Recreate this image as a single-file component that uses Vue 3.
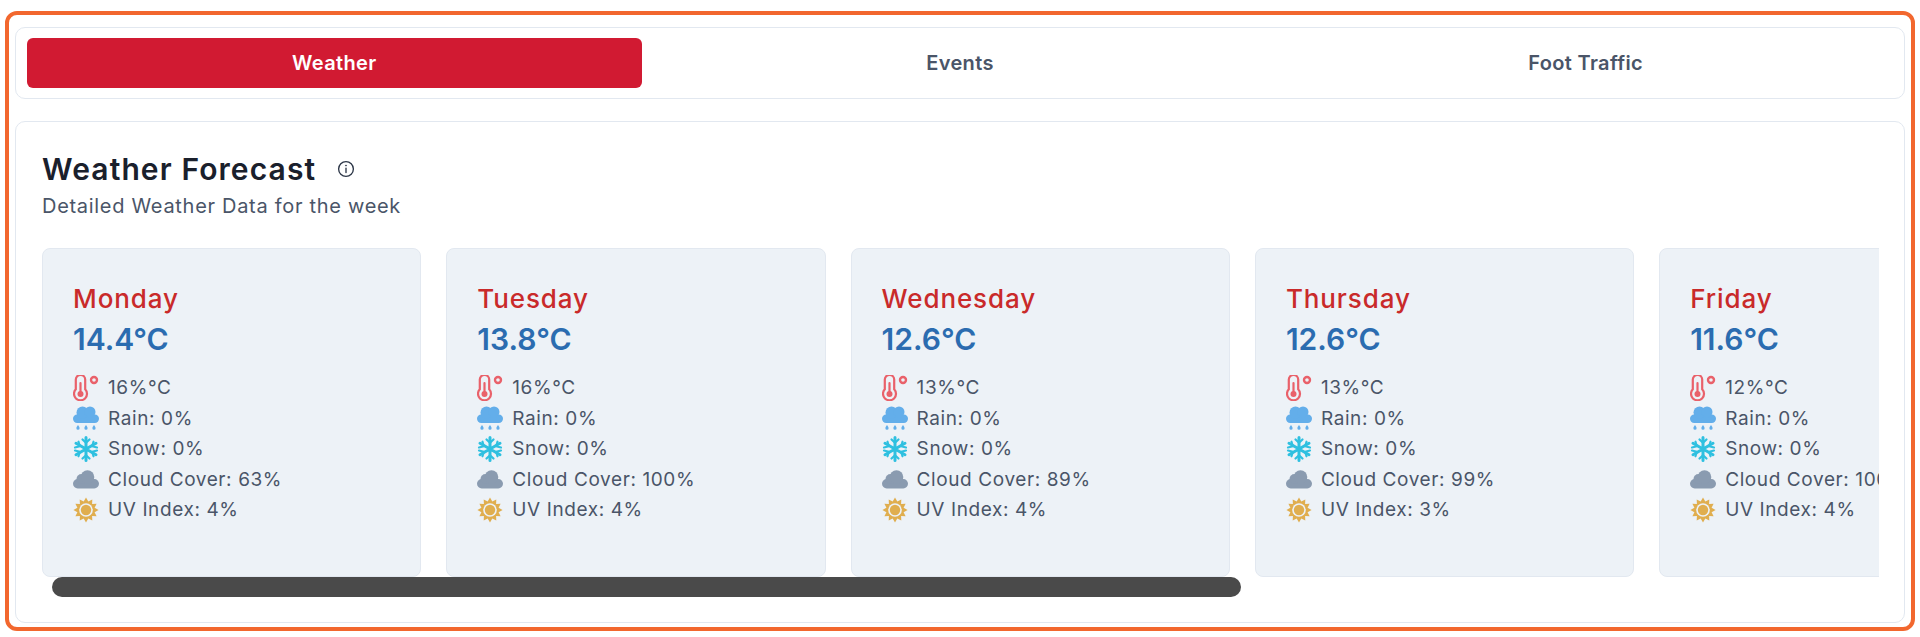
<template>
  <div class="page">
    <div class="frame">
      <!-- Tabs -->
      <div class="tabs">
        <button v-for="tab in tabs" :key="tab" type="button" class="tab" :class="{ active: tab === activeTab }" @click="activeTab = tab">
          {{ tab }}
        </button>
      </div>

      <!-- Forecast -->
      <section class="panel">
        <div class="panel-title">
          <h2>Weather Forecast</h2>
          <svg class="info" viewBox="0 0 20 20" fill="none" stroke="#2d3748" stroke-width="1.5">
            <circle cx="10" cy="10" r="8.2" />
            <path d="M10 9v5" stroke-linecap="round" />
            <circle cx="10" cy="6.2" r="0.6" fill="#2d3748" stroke-width="0.8" />
          </svg>
        </div>
        <p class="subtitle">Detailed Weather Data for the week</p>

        <div class="scroller">
          <article v-for="day in days" :key="day.name" class="card">
            <h3>{{ day.name }}</h3>
            <div class="temp">{{ day.temp }}°C</div>
            <ul>
              <li>
                <svg class="icon" viewBox="0 0 26 26">
                  <path d="M2.800 4.600a4.700 4.700 0 0 1 9.400 0v9.700a6.500 6.500 0 1 1-9.400 0z" fill="none" stroke="#e9616a" stroke-width="2.200" />
                  <path d="M7.500 8v10" stroke="#e9616a" stroke-width="2.200" stroke-linecap="round" />
                  <circle cx="7.500" cy="19" r="3" fill="#e9616a" />
                  <circle cx="21" cy="5" r="3" fill="none" stroke="#e9616a" stroke-width="2.400" />
                </svg>
                <span>{{ day.feels }}%°C</span>
              </li>
              <li>
                <svg class="icon" viewBox="0 0 26 26" fill="#63aeea">
                  <rect x="0" y="9.500" width="26" height="8.500" rx="4.200" />
                  <circle cx="9.500" cy="7.500" r="6" />
                  <circle cx="17" cy="7" r="5.500" />
                  <path d="M5 20c1 1.500 1.600 2.300 1.600 3.200a1.600 1.600 0 0 1-3.200 0c0-.9.600-1.700 1.600-3.200zM13 20c1 1.500 1.600 2.300 1.600 3.200a1.600 1.600 0 0 1-3.200 0c0-.9.600-1.700 1.600-3.200zM21 20c1 1.500 1.600 2.300 1.600 3.200a1.600 1.600 0 0 1-3.200 0c0-.9.600-1.700 1.600-3.200z" />
                </svg>
                <span>Rain: {{ day.rain }}%</span>
              </li>
              <li>
                <svg class="icon" viewBox="0 0 26 26" stroke="#2fc0e0" stroke-width="3" fill="none" stroke-linecap="round" stroke-linejoin="round">
                  <path d="M13 1.500v23M3 7.200l20 11.600M3 18.800l20-11.600" />
                  <path d="M9.500 3.500 13 6.800l3.500-3.300M9.500 22.500 13 19.200l3.500 3.300M2 11.500l4.800-1.200-1.300-4.600M24 14.500l-4.800 1.200 1.300 4.600M2 14.500l4.800 1.200-1.300 4.600M24 11.500l-4.800-1.200 1.300-4.600" stroke-width="2.200" />
                </svg>
                <span>Snow: {{ day.snow }}%</span>
              </li>
              <li>
                <svg class="icon" viewBox="0 0 26 26" fill="#8a9bb0">
                  <rect x="0" y="13" width="26" height="9.500" rx="4.700" />
                  <circle cx="8.500" cy="13" r="5" />
                  <circle cx="14.500" cy="11" r="6.800" />
                </svg>
                <span>Cloud Cover: {{ day.cloud }}%</span>
              </li>
              <li>
                <svg class="icon" viewBox="0 0 26 26">
                  <path d="M13 .5l2.300 4 4-2-.2 4.500 4.500-.2-2 4 4 2.200-4 2.200 2 4-4.500-.2.200 4.500-4-2-2.300 4-2.300-4-4 2 .2-4.500-4.500.2 2-4-4-2.200 4-2.200-2-4 4.500.2L6.700 2.500l4 2z" fill="#e0ae4f" />
                  <circle cx="13" cy="13" r="6.800" fill="#edf2f7" />
                  <circle cx="13" cy="13" r="5.200" fill="#e0ae4f" />
                </svg>
                <span>UV Index: {{ day.uv }}%</span>
              </li>
            </ul>
          </article>
        </div>

        <!-- Scrollbar -->
        <div class="scroll-track">
          <div class="scroll-thumb" :style="{ width: thumbWidth + '%' }"></div>
        </div>
      </section>
    </div>
  </div>
</template>

<script setup>
import { ref } from "vue";

const tabs = ["Weather", "Events", "Foot Traffic"];
const activeTab = ref("Weather");

const days = [
  { name: "Monday", temp: "14.4", feels: 16, rain: 0, snow: 0, cloud: 63, uv: 4 },
  { name: "Tuesday", temp: "13.8", feels: 16, rain: 0, snow: 0, cloud: 100, uv: 4 },
  { name: "Wednesday", temp: "12.6", feels: 13, rain: 0, snow: 0, cloud: 89, uv: 4 },
  { name: "Thursday", temp: "12.6", feels: 13, rain: 0, snow: 0, cloud: 99, uv: 3 },
  { name: "Friday", temp: "11.6", feels: 12, rain: 0, snow: 0, cloud: 100, uv: 4 },
  { name: "Saturday", temp: "11.9", feels: 12, rain: 0, snow: 0, cloud: 95, uv: 4 },
  { name: "Sunday", temp: "12.2", feels: 13, rain: 0, snow: 0, cloud: 90, uv: 4 },
];

// visible width of the row over its full width (7 cards and 6 gaps)
const thumbWidth = (1836 / (days.length * 379.3 + (days.length - 1) * 25)) * 100;
</script>

<style>
html,
body {
  margin: 0;
  background: #fff;
}
</style>

<style scoped>
.page {
  box-sizing: border-box;
  height: 637px;
  padding: 11px 5px 6px 5px;
  overflow: hidden;
  font-family: Inter, "Liberation Sans", sans-serif;
}

.frame {
  box-sizing: border-box;
  height: 620px;
  border: 4px solid #f2672e;
  border-radius: 12px;
  padding: 12px 6px 4px 6px;
  display: flex;
  flex-direction: column;
  gap: 22px;
}

/* Tabs */
.tabs {
  box-sizing: border-box;
  height: 72px;
  border: 1px solid #e2e8f0;
  border-radius: 10px;
  padding: 10px 11px;
  display: grid;
  grid-template-columns: repeat(3, 1fr);
  gap: 11px;
}

.tab {
  border: 0;
  border-radius: 6px;
  background: transparent;
  color: #4a5568;
  font: 600 20px Inter, "Liberation Sans", sans-serif;
  letter-spacing: 0.35px;
  cursor: pointer;
}

.tab.active {
  background: #d11a32;
  color: #fff;
}

/* Panel */
.panel {
  flex: 1;
  min-height: 0;
  border: 1px solid #e2e8f0;
  border-radius: 10px;
  padding: 26px 25px 25px 26px;
}

.panel-title {
  display: flex;
  align-items: center;
  gap: 21px;
  height: 42px;
}

h2 {
  margin: 0;
  color: #1a202c;
  font-size: 30px;
  font-weight: 600;
  letter-spacing: 1.1px;
}

.info {
  width: 18px;
  height: 18px;
}

.subtitle {
  margin: 3px 0 28px;
  color: #4a5568;
  font-size: 20px;
  line-height: 27px;
  letter-spacing: 0.7px;
}

/* Cards */
.scroller {
  display: flex;
  gap: 25px;
  overflow: hidden;
}

.scroll-track {
  height: 20px;
  margin: 0 10px;
}

.scroll-thumb {
  height: 100%;
  border-radius: 10px;
  background: #4a4a4a;
}

.card {
  box-sizing: border-box;
  flex: 0 0 379.3px;
  height: 329px;
  border: 1px solid #e2e8f0;
  border-radius: 8px;
  background: #edf2f7;
  padding: 32px 30px 0;
}

h3 {
  margin: 0;
  color: #c92a2a;
  font-size: 26px;
  font-weight: 500;
  line-height: 36px;
  letter-spacing: 0.9px;
}

.temp {
  margin-top: 1px;
  color: #2b6cb0;
  font-size: 30px;
  font-weight: 600;
  line-height: 42px;
}

ul {
  margin: 14px 0 0;
  padding: 0;
  list-style: none;
  display: flex;
  flex-direction: column;
  gap: 3.5px;
}

li {
  display: flex;
  align-items: center;
  gap: 9px;
  height: 27px;
  color: #4a5568;
  font-size: 19px;
  letter-spacing: 0.6px;
}

.icon {
  flex: none;
  width: 26px;
  height: 26px;
}
</style>
